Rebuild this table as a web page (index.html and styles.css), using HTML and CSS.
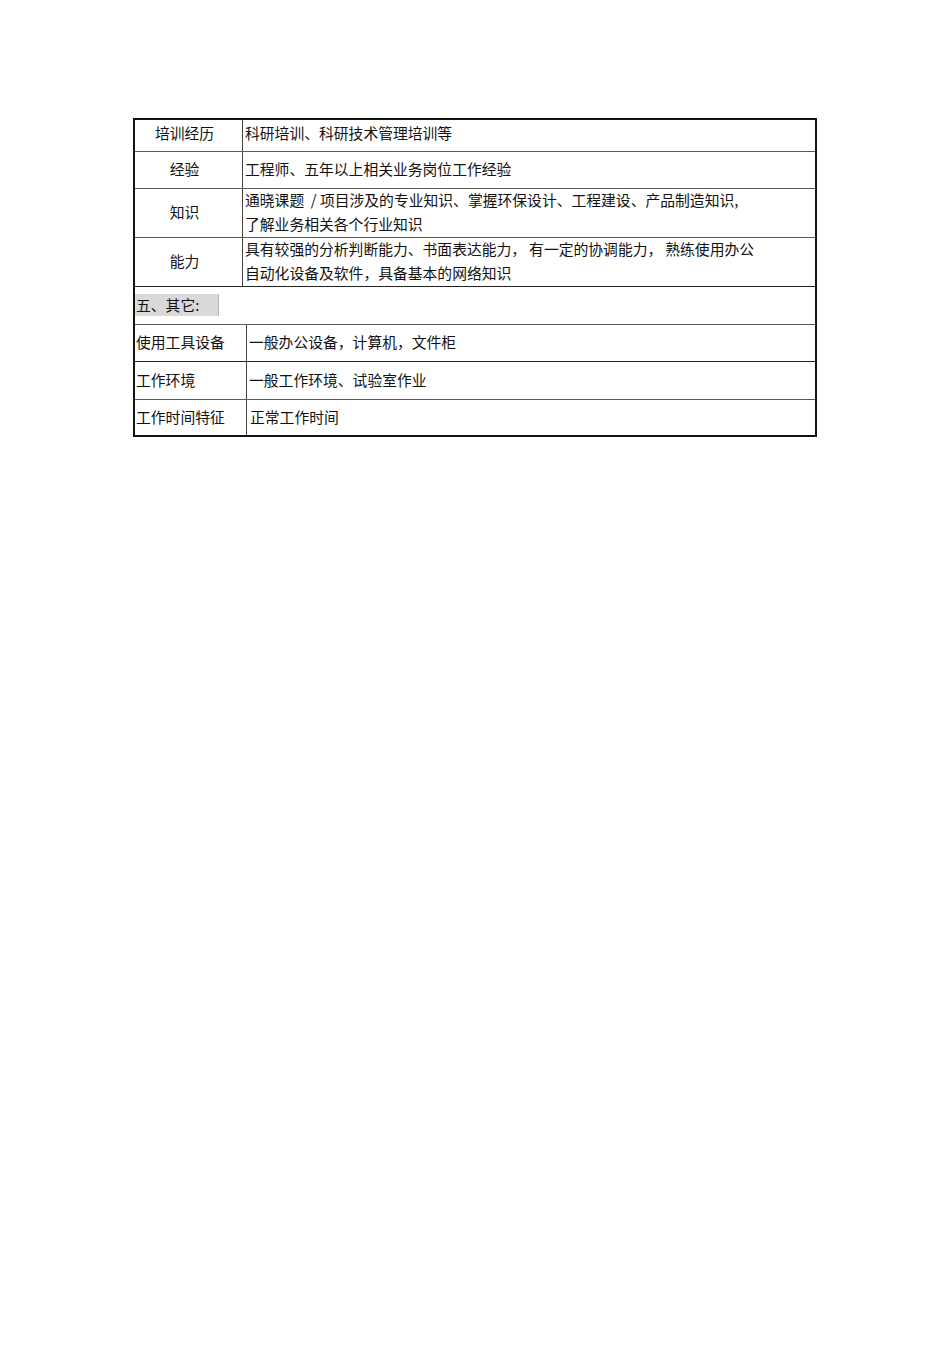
FILE: index.html
```html
<!DOCTYPE html>
<html lang="zh-CN">
<head>
<meta charset="utf-8">
<title>岗位说明</title>
<link rel="stylesheet" href="styles.css">
</head>
<body>
<div class="sheet">
  <div class="row top r1">
    <div class="label">培训经历</div>
    <div class="value">科研培训、科研技术管理培训等</div>
  </div>
  <div class="row top r2">
    <div class="label">经验</div>
    <div class="value">工程师、五年以上相关业务岗位工作经验</div>
  </div>
  <div class="row top r3">
    <div class="label">知识</div>
    <div class="value multi">通晓课题 &nbsp;/ 项目涉及的专业知识、掌握环保设计、工程建设、产品制造知识,<br>了解业务相关各个行业知识</div>
  </div>
  <div class="row top r4 dark">
    <div class="label">能力</div>
    <div class="value multi">具有较强的分析判断能力、书面表达能力，&thinsp;有一定的协调能力，&thinsp;熟练使用办公<br>自动化设备及软件，具备基本的网络知识</div>
  </div>
  <div class="row section r5">
    <span class="section-title">五、其它:</span>
  </div>
  <div class="row bottom r6 dark">
    <div class="label">使用工具设备</div>
    <div class="value">一般办公设备，计算机，文件柜</div>
  </div>
  <div class="row bottom r7">
    <div class="label">工作环境</div>
    <div class="value">一般工作环境、试验室作业</div>
  </div>
  <div class="row bottom r8 last">
    <div class="label">工作时间特征</div>
    <div class="value v8">正常工作时间</div>
  </div>
</div>
</body>
</html>
```

FILE: styles.css
```css
html, body {
  margin: 0;
  padding: 0;
  background: #ffffff;
}

body {
  font-family: "Noto Sans CJK SC", "Liberation Serif", serif;
  font-size: 14.8px;
  color: #111;
}

.sheet {
  box-sizing: border-box;
  width: 684px;
  margin: 118px 0 0 133px;
  border: 2px solid #111;
  display: flex;
  flex-direction: column;
}

.row {
  display: grid;
  border-bottom: 1px solid #5a5a5a;
  box-sizing: border-box;
}

.row.dark {
  border-bottom-color: #222;
}

.row.last {
  border-bottom: none;
}

.row.top {
  grid-template-columns: 108px 1fr;
}

.row.bottom {
  grid-template-columns: 112px 1fr;
}

.r1 { height: 32px; }
.r2 { height: 37px; }
.r3 { height: 49px; }
.r4 { height: 49px; }
.r5 { height: 38px; }
.r6 { height: 37px; }
.r7 { height: 38px; }
.r8 { height: 35px; }

.label {
  border-right: 1px solid #444;
  display: flex;
  align-items: center;
  line-height: 20px;
  padding-bottom: 2px;
}

.r1 .label,
.r1 .value {
  padding-bottom: 5px;
}

.row.top .label {
  justify-content: center;
  padding-right: 8px;
}

.row.bottom .label {
  padding-left: 1px;
}

.value {
  display: flex;
  align-items: center;
  padding-left: 2px;
  line-height: 20px;
  padding-bottom: 2px;
  white-space: nowrap;
}

.value.multi {
  display: block;
  line-height: 24px;
  padding-bottom: 0;
  margin-top: -1px;
}

.value.v8 {
  padding-left: 3px;
}

.row.section {
  display: flex;
  align-items: center;
  padding-bottom: 2px;
}

.section-title {
  display: inline-block;
  background: #d9d9d9;
  border-right: 1px solid #b8b8b8;
  height: 22px;
  line-height: 21px;
  padding: 0 19px 0 1px;
}
```
